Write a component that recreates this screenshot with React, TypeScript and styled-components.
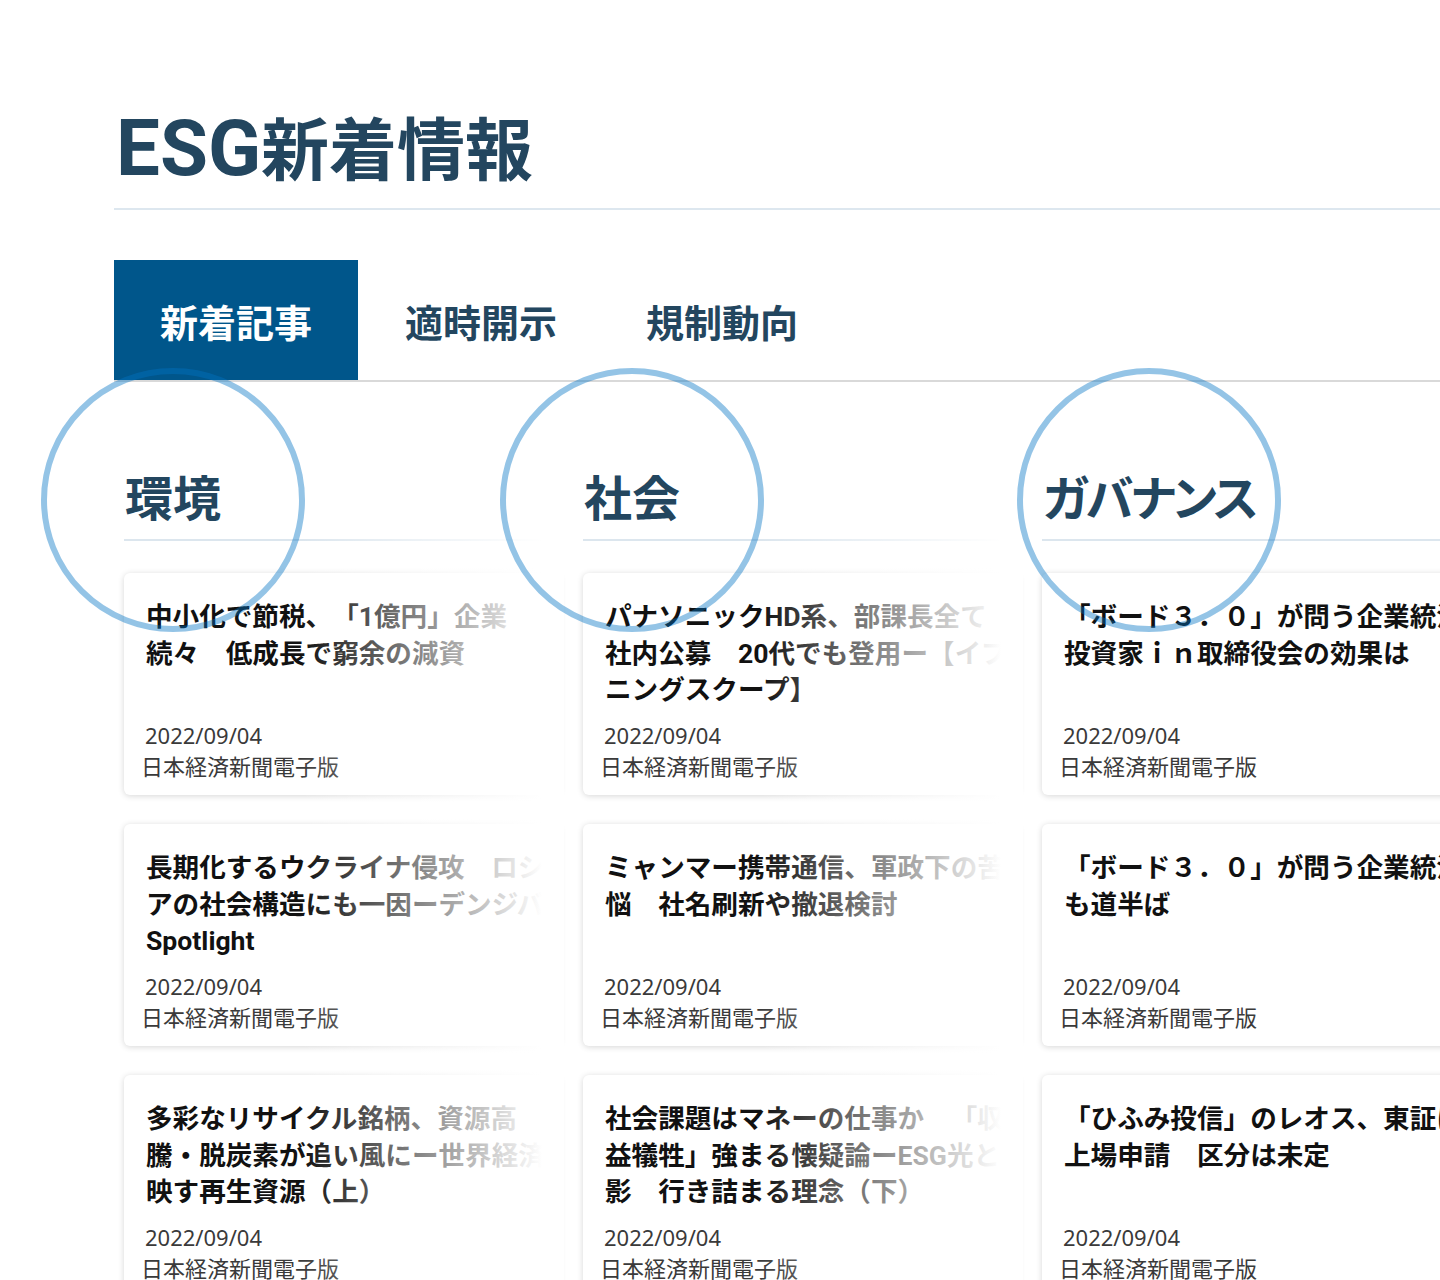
import React from "react";
import styled, { createGlobalStyle, css } from "styled-components";

const GlobalStyle = createGlobalStyle`
  html, body {
    margin: 0;
    padding: 0;
    background: #ffffff;
  }
  body {
    overflow-x: hidden;
    font-family: Roboto, "Noto Sans CJK JP", sans-serif;
    text-spacing-trim: space-all;
  }
`;

const Page = styled.main`
  box-sizing: border-box;
  min-height: 1280px;
  padding: 116px 0 0 114px;
  overflow: hidden;
`;

const Title = styled.h1`
  margin: 0;
  padding: 0 0 20px 2px;
  font-size: 68px;
  line-height: 72px;
  font-weight: 700;
  color: #23465f;
  white-space: nowrap;
  border-bottom: 2px solid #dde7ef;
`;

const TitleLatin = styled.span`
  font-size: 78px;
  line-height: 0;
`;

const TabBar = styled.nav`
  display: flex;
  margin-top: 50px;
  border-bottom: 2px solid #d9d9d9;
`;

const Tab = styled.div<{ $active?: boolean }>`
  display: flex;
  align-items: center;
  height: 120px;
  padding: 0 ${(p) => (p.$active ? 46 : 42)}px 0 ${(p) => (p.$active ? 46 : 47)}px;
  font-size: 38px;
  font-weight: 700;
  color: ${(p) => (p.$active ? "#ffffff" : "#23465f")};
  background: ${(p) => (p.$active ? "#00568b" : "transparent")};
  white-space: nowrap;
`;

const Columns = styled.div`
  display: grid;
  grid-template-columns: repeat(3, 436px);
  column-gap: 23px;
  margin: 94px 0 0 10px;
`;

const Column = styled.section<{ $faded?: boolean }>`
  position: relative;

  ${(p) =>
    p.$faded &&
    css`
      &::after {
        content: "";
        position: absolute;
        top: -10px;
        bottom: -20px;
        left: 0;
        right: -4px;
        z-index: 2;
        pointer-events: none;
        background: linear-gradient(
          to right,
          rgba(255, 255, 255, 0) 40%,
          #ffffff 95%
        );
      }
    `}
`;

const SectionHead = styled.div`
  padding-bottom: 15px;
  margin-bottom: 32px;
  border-bottom: 2px solid #dce6ee;
`;

const HeadText = styled.h2<{ $tracking?: number }>`
  position: relative;
  display: inline-block;
  margin: 0;
  padding-left: 1px;
  font-size: 48px;
  line-height: 48px;
  font-weight: 700;
  letter-spacing: ${(p) => p.$tracking ?? 0}px;
  color: #23465f;
  font-feature-settings: "palt";
  white-space: nowrap;

  &::before {
    content: "";
    position: absolute;
    left: 50%;
    top: 50%;
    box-sizing: border-box;
    width: 264px;
    height: 264px;
    margin: -132px 0 0 -132px;
    border: 6px solid rgba(0, 115, 195, 0.42);
    border-radius: 50%;
    z-index: 3;
    pointer-events: none;
  }
`;

const CardList = styled.div`
  display: flex;
  flex-direction: column;
  gap: 29px;
`;

const Card = styled.article`
  box-sizing: border-box;
  display: flex;
  flex-direction: column;
  height: 222px;
  padding: 26px 10px 13px 22px;
  background: #ffffff;
  border-radius: 6px;
  box-shadow: 0 1px 6px rgba(0, 0, 0, 0.16);
`;

const CardTitle = styled.h3`
  margin: 0;
  font-size: 26.6px;
  line-height: 36.5px;
  font-weight: 700;
  color: #111111;
  text-spacing-trim: space-all;
`;

const Meta = styled.div`
  margin-top: auto;
  font-family: "Noto Sans", "Noto Sans CJK JP", sans-serif;
  font-size: 22px;
  line-height: 31px;
  color: #3a3a3a;
`;

const MetaLine = styled.div<{ $shift?: number }>`
  margin-left: ${(p) => p.$shift ?? 0}px;
`;

type Section = { name: string; tracking?: number; faded: boolean; titles: string[] };

const SRC = "日本経済新聞電子版";
const DATE = "2022/09/04";

const sections: Section[] = [
  {
    name: "環境",
    faded: true,
    titles: [
      "中小化で節税、「1億円」企業続々　低成長で窮余の減資",
      "長期化するウクライナ侵攻　ロシアの社会構造にも一因ーデンジバ Spotlight",
      "多彩なリサイクル銘柄、資源高騰・脱炭素が追い風にー世界経済映す再生資源（上）",
    ],
  },
  {
    name: "社会",
    faded: true,
    titles: [
      "パナソニックHD系、部課長全て社内公募　20代でも登用ー【イブニングスクープ】",
      "ミャンマー携帯通信、軍政下の苦悩　社名刷新や撤退検討",
      "社会課題はマネーの仕事か　「収益犠牲」強まる懐疑論ーESG光と影　行き詰まる理念（下）",
    ],
  },
  {
    name: "ガバナンス",
    tracking: -2.5,
    faded: false,
    titles: [
      "「ボード３．０」が問う企業統治　投資家ｉｎ取締役会の効果は",
      "「ボード３．０」が問う企業統治も道半ば",
      "「ひふみ投信」のレオス、東証に上場申請　区分は未定",
    ],
  },
];

const tabs = ["新着記事", "適時開示", "規制動向"];

export default function App() {
  return (
    <>
      <GlobalStyle />
      <Page>
        <Title>
          <TitleLatin>ESG</TitleLatin>新着情報
        </Title>

        <TabBar>
          {tabs.map((t, i) => (
            <Tab key={t} $active={i === 0}>
              {t}
            </Tab>
          ))}
        </TabBar>

        <Columns>
          {sections.map((s) => (
            <Column key={s.name} $faded={s.faded}>
              <SectionHead>
                <HeadText $tracking={s.tracking}>{s.name}</HeadText>
              </SectionHead>
              <CardList>
                {s.titles.map((title, i) => (
                  <Card key={i}>
                    <CardTitle>{title}</CardTitle>
                    <Meta>
                      <MetaLine $shift={-1}>{DATE}</MetaLine>
                      <MetaLine $shift={-5}>{SRC}</MetaLine>
                    </Meta>
                  </Card>
                ))}
              </CardList>
            </Column>
          ))}
        </Columns>
      </Page>
    </>
  );
}
